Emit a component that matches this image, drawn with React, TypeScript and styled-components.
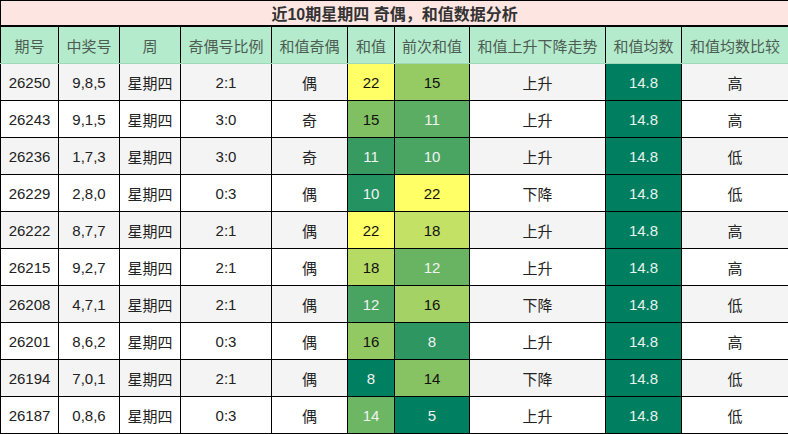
import React from "react";
import styled, { createGlobalStyle } from "styled-components";

const Global = createGlobalStyle`
  html, body { margin: 0; padding: 0; background: #ffffff; }
  body { font-family: "Liberation Sans", "Noto Sans CJK SC", sans-serif; }
`;

const Table = styled.table`
  border-collapse: collapse;
  table-layout: fixed;
  width: 788px;
  font-family: "Liberation Sans", "Noto Sans CJK SC", sans-serif;
  font-size: 15px;
`;

const TitleCell = styled.th`
  height: 24px;
  padding: 0;
  background: #fde6e1;
  color: #333333;
  font-size: 16px;
  font-weight: bold;
  text-align: center;
  border: 1px solid #000;
  border-bottom: 2px solid #000;
`;

const HeadCell = styled.th`
  height: 36px;
  padding: 0;
  background: #b3ebcc;
  color: #4d5c52;
  font-weight: normal;
  font-size: 15px;
  text-align: center;
  border: 1px solid #000;
  border-bottom: 1px solid #9fd9b8;
`;

const Row = styled.tr<{ $alt: boolean }>`
  background: ${(p) => (p.$alt ? "#f4f4f4" : "#ffffff")};
`;

const Cell = styled.td<{ $bg?: string; $fg?: string }>`
  height: 36px;
  padding: 0;
  text-align: center;
  border: 1px solid #000;
  color: ${(p) => p.$fg || "#222222"};
  background: ${(p) => p.$bg || "transparent"};
`;

type R = { id: string; nums: string; ratio: string; oe: string; sum: number; prev: number; trend: string; cmp: string };

const rows: R[] = [
  { id: "26250", nums: "9,8,5", ratio: "2:1", oe: "偶", sum: 22, prev: 15, trend: "上升", cmp: "高" },
  { id: "26243", nums: "9,1,5", ratio: "3:0", oe: "奇", sum: 15, prev: 11, trend: "上升", cmp: "高" },
  { id: "26236", nums: "1,7,3", ratio: "3:0", oe: "奇", sum: 11, prev: 10, trend: "上升", cmp: "低" },
  { id: "26229", nums: "2,8,0", ratio: "0:3", oe: "偶", sum: 10, prev: 22, trend: "下降", cmp: "低" },
  { id: "26222", nums: "8,7,7", ratio: "2:1", oe: "偶", sum: 22, prev: 18, trend: "上升", cmp: "高" },
  { id: "26215", nums: "9,2,7", ratio: "2:1", oe: "偶", sum: 18, prev: 12, trend: "上升", cmp: "高" },
  { id: "26208", nums: "4,7,1", ratio: "2:1", oe: "偶", sum: 12, prev: 16, trend: "下降", cmp: "低" },
  { id: "26201", nums: "8,6,2", ratio: "0:3", oe: "偶", sum: 16, prev: 8, trend: "上升", cmp: "高" },
  { id: "26194", nums: "7,0,1", ratio: "2:1", oe: "偶", sum: 8, prev: 14, trend: "下降", cmp: "低" },
  { id: "26187", nums: "0,8,6", ratio: "0:3", oe: "偶", sum: 14, prev: 5, trend: "上升", cmp: "低" },
];

const lo = [0, 128, 96];
const hi = [255, 255, 102];

function heat(v: number, min: number, max: number) {
  const t = (v - min) / (max - min);
  const c = lo.map((a, i) => Math.round(a + (hi[i] - a) * t));
  return { bg: `rgb(${c[0]},${c[1]},${c[2]})`, fg: t < 0.47 ? "#f2f2f2" : "#111111" };
}

const sums = rows.map((r) => r.sum);
const prevs = rows.map((r) => r.prev);
const sMin = Math.min(...sums), sMax = Math.max(...sums);
const pMin = Math.min(...prevs), pMax = Math.max(...prevs);

const widths = [58, 61, 61, 91, 76, 47, 75, 136, 76, 107];
const heads = ["期号", "中奖号", "周", "奇偶号比例", "和值奇偶", "和值", "前次和值", "和值上升下降走势", "和值均数", "和值均数比较"];

export default function App() {
  return (
    <>
      <Global />
      <Table>
        <colgroup>
          {widths.map((w, i) => (
            <col key={i} style={{ width: w }} />
          ))}
        </colgroup>
        <thead>
          <tr>
            <TitleCell colSpan={10}>近10期星期四 奇偶，和值数据分析</TitleCell>
          </tr>
          <tr>
            {heads.map((h) => (
              <HeadCell key={h}>{h}</HeadCell>
            ))}
          </tr>
        </thead>
        <tbody>
          {rows.map((r, i) => {
            const s = heat(r.sum, sMin, sMax);
            const p = heat(r.prev, pMin, pMax);
            return (
              <Row key={r.id} $alt={i % 2 === 0}>
                <Cell>{r.id}</Cell>
                <Cell>{r.nums}</Cell>
                <Cell>星期四</Cell>
                <Cell>{r.ratio}</Cell>
                <Cell>{r.oe}</Cell>
                <Cell $bg={s.bg} $fg={s.fg}>{r.sum}</Cell>
                <Cell $bg={p.bg} $fg={p.fg}>{r.prev}</Cell>
                <Cell>{r.trend}</Cell>
                <Cell $bg="#007f60" $fg="#e8f2ee">14.8</Cell>
                <Cell>{r.cmp}</Cell>
              </Row>
            );
          })}
        </tbody>
      </Table>
    </>
  );
}
